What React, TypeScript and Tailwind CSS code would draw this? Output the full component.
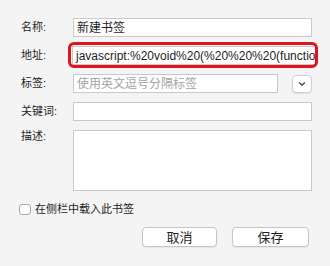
import { ChevronDown } from "lucide-react"

const fieldCls =
  "h-[19px] bg-white border border-[#c9c9c9] px-[3px] flex items-center whitespace-nowrap overflow-hidden text-[12px]"

export default function App() {
  return (
    <div className="w-[330px] h-[266px] bg-[#f4f4f4] text-[#1e1e1e] text-[11px] font-['Liberation_Sans','Noto_Sans_CJK_SC',sans-serif] pt-[18px] pl-[21px]">
      {/* Form rows */}
      <div className="grid grid-cols-[52px_239px] gap-y-[9px]">
        <div className="leading-[19px]">名称:</div>
        <div className={fieldCls}>新建书签</div>

        <div className="leading-[19px]">地址:</div>
        <div className="relative -ml-px w-[244px]">
          <div className={fieldCls}>javascript:%20void%20(%20%20%20(functio</div>
          <div className="absolute -left-[4px] -right-[2px] -top-[4px] -bottom-[3px] border-[3px] border-[#e0141e] rounded-[6px]" />
        </div>

        <div className="leading-[19px]">标签:</div>
        <div className="flex items-center justify-between">
          <div className={fieldCls + " w-[205px] text-[#a3a3a3]"}>使用英文逗号分隔标签</div>
          <button className="w-[20px] h-[18px] bg-white border border-[#cfcfcf] rounded-[4px] flex items-center justify-center shadow-[0_1px_1px_rgba(0,0,0,0.08)]">
            <ChevronDown className="w-[10px] h-[10px] text-[#444]" strokeWidth={3} />
          </button>
        </div>

        <div className="leading-[19px]">关键词:</div>
        <div className={fieldCls} />

        <div className="leading-[13px]">描述:</div>
        <div className="h-[61px] bg-white border border-[#c9c9c9]" />
      </div>

      {/* Sidebar checkbox */}
      <label className="flex items-center gap-[4px] h-[16px] mt-[10px] -ml-[2px]">
        <span className="w-[12px] h-[11px] bg-white border border-[#a9a9a9] rounded-[3px]" />
        <span>在侧栏中载入此书签</span>
      </label>

      {/* Actions */}
      <div className="flex gap-[15px] mt-[10px] ml-[121px] text-[13px]">
        <button className="w-[75px] h-[20px] bg-white border border-[#c4c4c4] rounded-[4px] shadow-[0_1px_1px_rgba(0,0,0,0.06)]">取消</button>
        <button className="w-[77px] h-[20px] bg-white border border-[#c4c4c4] rounded-[4px] shadow-[0_1px_1px_rgba(0,0,0,0.06)]">保存</button>
      </div>
    </div>
  )
}
